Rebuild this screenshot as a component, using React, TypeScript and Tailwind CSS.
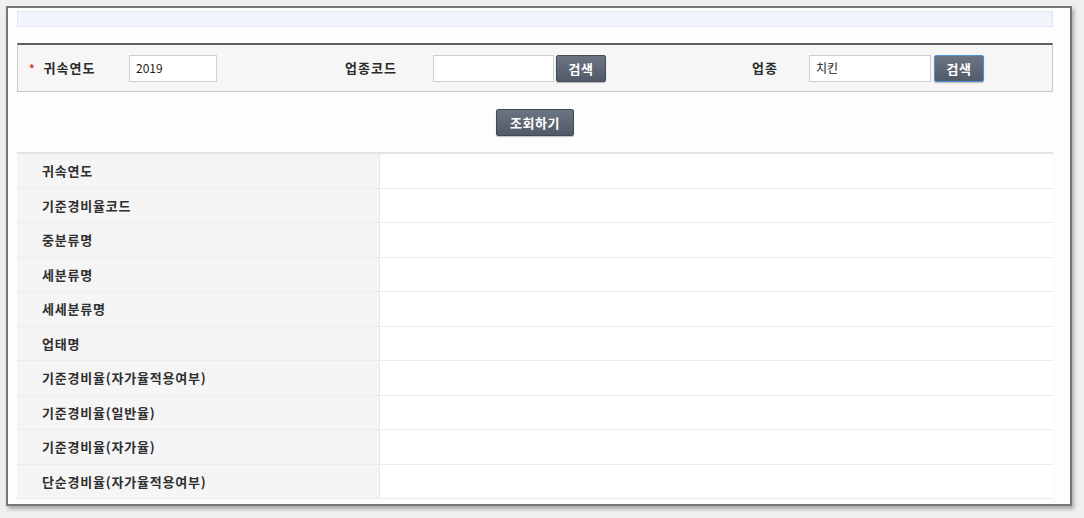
import React from "react";

const font = { fontFamily: '"Noto Sans CJK KR", "Noto Sans", sans-serif' };

const rows = [
  "귀속연도",
  "기준경비율코드",
  "중분류명",
  "세분류명",
  "세세분류명",
  "업태명",
  "기준경비율(자가율적용여부)",
  "기준경비율(일반율)",
  "기준경비율(자가율)",
  "단순경비율(자가율적용여부)",
];

function Btn({ label, focus = false, w = "w-[50px]" }: { label: string; focus?: boolean; w?: string }) {
  return (
    <button
      className={`${w} h-[27px] rounded-[2px] border ${
        focus ? "border-[#4a8fd8]" : "border-[#434955]"
      } bg-gradient-to-b from-[#6c7482] to-[#535a67] text-white text-[13px] font-bold tracking-[0.5px] leading-none shadow-[0_1px_1px_rgba(0,0,0,0.25)]`}
      style={font}
    >
      {label}
    </button>
  );
}

function Input({ value, w }: { value: string; w: string }) {
  return (
    <div
      className={`${w} h-[27px] border border-[#cfcfcf] bg-white flex items-center pl-[6px] text-[12px] text-[#222]`}
      style={font}
    >
      {value}
    </div>
  );
}

export default function App() {
  return (
    <div className="w-[1084px] h-[518px] bg-[#efefef] pt-[6px] pl-[6px] overflow-hidden" style={font}>
      <div className="w-[1066px] h-[500px] border-2 border-[#767676] bg-[#fdfdfd] shadow-[2px_3px_4px_rgba(0,0,0,0.3)] pl-[9px] pr-[17px] pt-[3px] overflow-hidden">
        <div className="h-[16px] bg-[#f1f5fb] border border-[#e1e7f0]" />
        <div className="mt-[16px] h-[49px] border-t-2 border-t-[#5e5e5e] border-x border-b border-[#c9c9c9] bg-[#f6f6f6] flex items-center">
          <div className="w-[111px] flex items-center pl-[11px] text-[13px] font-bold text-[#2b2b2b] tracking-[1px]">
            <span className="text-[#d9302a] text-[11px] mr-[8px]">*</span>
            귀속연도
          </div>
          <Input value="2019" w="w-[88px]" />
          <div className="w-[128px]" />
          <div className="w-[88px] text-[13px] font-bold text-[#2b2b2b] tracking-[1px]">업종코드</div>
          <Input value="" w="w-[121px]" />
          <div className="w-[2px]" />
          <Btn label="검색" />
          <div className="w-[146px]" />
          <div className="w-[57px] text-[13px] font-bold text-[#2b2b2b] tracking-[1px]">업종</div>
          <Input value="치킨" w="w-[122px]" />
          <div className="w-[3px]" />
          <Btn label="검색" focus />
        </div>
        <div className="flex justify-center mt-[17px]">
          <Btn label="조회하기" w="w-[78px]" />
        </div>
        <div className="mt-[16px] border-t-2 border-[#e3e3e3]">
          {rows.map((r, i) => (
            <div key={i} className="flex h-[34.5px] border-b border-[#ececec]">
              <div className="w-[363px] bg-[#f5f5f5] border-r border-[#e6e6e6] flex items-center pl-[25px] text-[13px] font-bold text-[#2f2f2f] tracking-[0.8px]">
                {r}
              </div>
              <div className="flex-1 bg-white" />
            </div>
          ))}
        </div>
      </div>
    </div>
  );
}
